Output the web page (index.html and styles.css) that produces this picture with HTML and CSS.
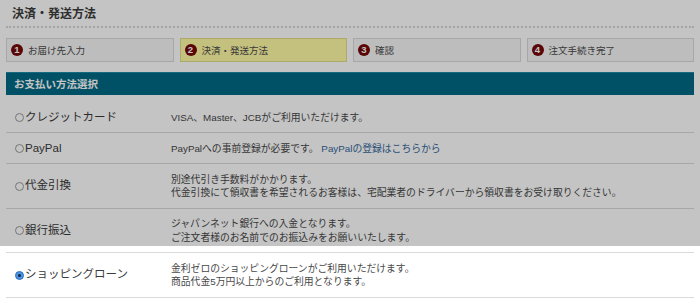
FILE: index.html
```html
<!DOCTYPE html>
<html lang="ja">
<head>
<meta charset="utf-8">
<title>決済・発送方法</title>
<link rel="stylesheet" href="styles.css">
</head>
<body>
<div class="page">
  <h1 class="title">決済・発送方法</h1>

  <ol class="steps">
    <li class="step"><span class="num">1</span>お届け先入力</li>
    <li class="step current"><span class="num">2</span>決済・発送方法</li>
    <li class="step"><span class="num">3</span>確認</li>
    <li class="step"><span class="num">4</span>注文手続き完了</li>
  </ol>

  <h2 class="bar">お支払い方法選択</h2>

  <div class="methods">
    <div class="method">
      <div class="label"><span class="radio"></span>クレジットカード</div>
      <div class="desc">VISA、Master、JCBがご利用いただけます。</div>
    </div>
    <div class="method">
      <div class="label"><span class="radio"></span>PayPal</div>
      <div class="desc">PayPalへの事前登録が必要です。 <a href="#">PayPalの登録はこちらから</a></div>
    </div>
    <div class="method">
      <div class="label"><span class="radio"></span>代金引換</div>
      <div class="desc">別途代引き手数料がかかります。<br>代金引換にて領収書を希望されるお客様は、宅配業者のドライバーから領収書をお受け取りください。</div>
    </div>
    <div class="method">
      <div class="label"><span class="radio"></span>銀行振込</div>
      <div class="desc">ジャパンネット銀行への入金となります。<br>ご注文者様のお名前でのお振込みをお願いいたします。</div>
    </div>
    <div class="method">
      <div class="label"><span class="radio on"></span>ショッピングローン</div>
      <div class="desc">金利ゼロのショッピングローンがご利用いただけます。<br>商品代金5万円以上からのご利用となります。</div>
    </div>
  </div>
</div>
<div class="shade"></div>
</body>
</html>
```

FILE: styles.css
```css
body {
  margin: 0;
  background: #fff;
  color: #444;
  font-family: "Liberation Sans", "Noto Sans CJK JP", sans-serif;
}
.page { margin: 0 6px; }

.title {
  margin: 0;
  padding: 6px 6px 4px;
  font-size: 12px; line-height: 16px;
  color: #3c3c3c;
  border-bottom: 2px dotted #d6d6d6;
}

.steps {
  list-style: none;
  margin: 10px 0 0; padding: 0;
  display: flex; gap: 6px;
}
.step {
  flex: 1;
  height: 22px;
  display: flex; align-items: center;
  padding-left: 4px;
  font-size: 9.5px;
  color: #4a4a4a;
  background: #f6f6f6;
  border: 1px solid #dadada;
}
.step.current { background: #fffaa4; border-color: #e2dc8a; }
.num {
  width: 12px; height: 12px;
  border-radius: 50%;
  background: #760909;
  color: #fff;
  font-size: 9.5px; font-weight: bold; line-height: 12px;
  text-align: center;
  margin-right: 5px;
}

.bar {
  margin: 10px 0 0;
  height: 22px;
  padding-left: 8px;
  background: #006885;
  border-top: 1px solid #1b8aa8;
  color: #fff;
  font-size: 10.5px; line-height: 22px;
}

.methods { padding-top: 7px; }
.method {
  display: flex; align-items: center;
  padding: 8.5px 0 8px;
  border-bottom: 1px solid #dadada;
  line-height: 13.5px;
}
.label {
  width: 156px;
  padding-left: 9px;
  display: flex; align-items: center;
  font-size: 11.5px;
  color: #3a3a3a;
}
.desc { font-size: 9.8px; color: #484848; }
.desc a { color: #34689b; text-decoration: none; }

.radio {
  width: 7px; height: 7px;
  border: 1px solid #9a9a9a;
  border-radius: 50%;
  background: #fff;
  margin-right: 1px;
  position: relative;
}
.radio.on { background: #4c93e0; border-color: #2f6fbf; }
.radio.on::after {
  content: "";
  position: absolute; left: 2px; top: 2px;
  width: 3px; height: 3px;
  border-radius: 50%;
  background: #0d2440;
}

.shade {
  position: absolute; left: 0; top: 0;
  width: 100%; height: 246px;
  background: rgba(0, 0, 0, 0.23);
}
```
